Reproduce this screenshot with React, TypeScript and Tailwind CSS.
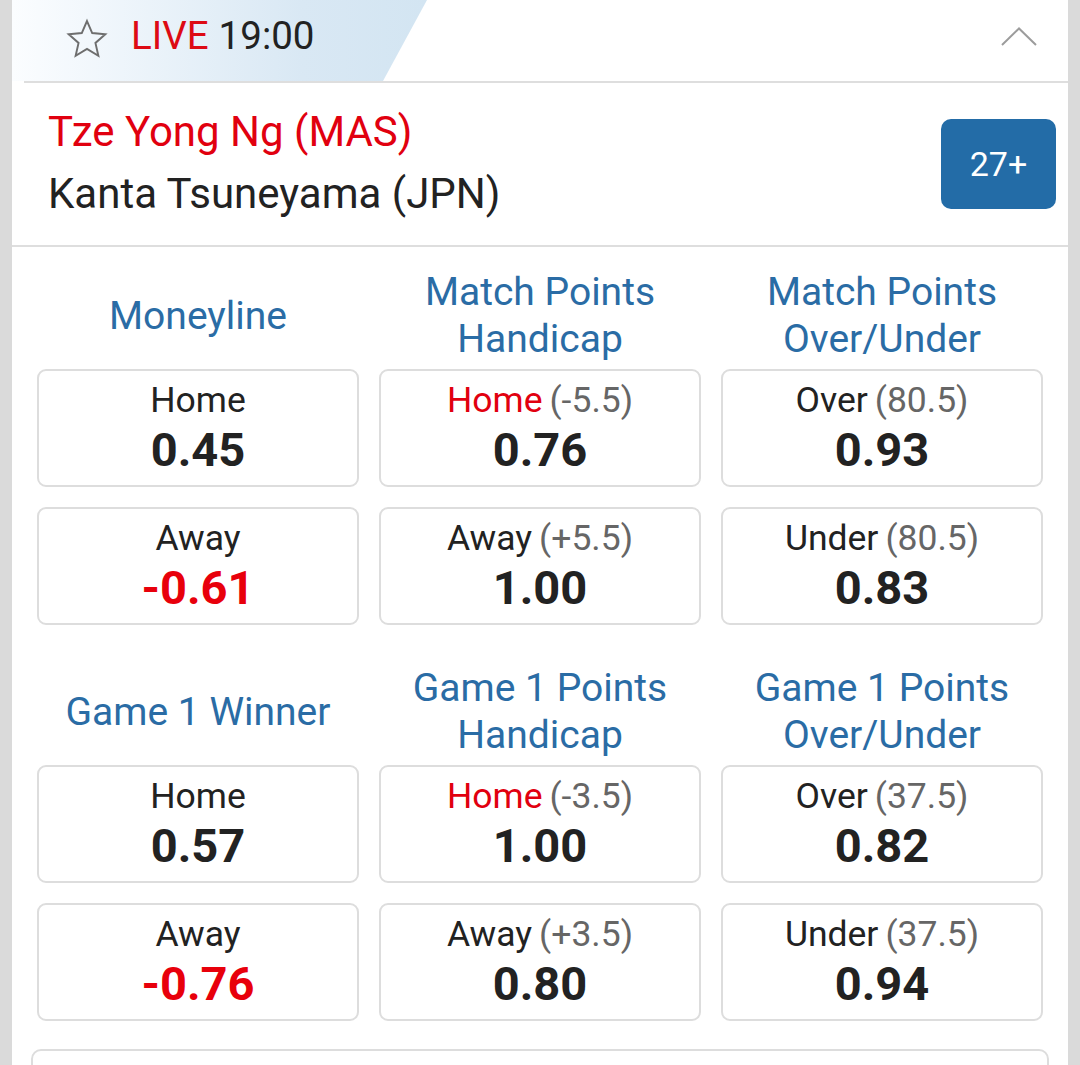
import React from "react";

type Cell = { label: string; labelRed?: boolean; line?: string; value: string; valueRed?: boolean };

const groups: { headers: string[][]; rows: Cell[][] }[] = [
  {
    headers: [["Moneyline"], ["Match Points", "Handicap"], ["Match Points", "Over/Under"]],
    rows: [
      [
        { label: "Home", value: "0.45" },
        { label: "Home", labelRed: true, line: "(-5.5)", value: "0.76" },
        { label: "Over", line: "(80.5)", value: "0.93" },
      ],
      [
        { label: "Away", value: "-0.61", valueRed: true },
        { label: "Away", line: "(+5.5)", value: "1.00" },
        { label: "Under", line: "(80.5)", value: "0.83" },
      ],
    ],
  },
  {
    headers: [["Game 1 Winner"], ["Game 1 Points", "Handicap"], ["Game 1 Points", "Over/Under"]],
    rows: [
      [
        { label: "Home", value: "0.57" },
        { label: "Home", labelRed: true, line: "(-3.5)", value: "1.00" },
        { label: "Over", line: "(37.5)", value: "0.82" },
      ],
      [
        { label: "Away", value: "-0.76", valueRed: true },
        { label: "Away", line: "(+3.5)", value: "0.80" },
        { label: "Under", line: "(37.5)", value: "0.94" },
      ],
    ],
  },
];

function OddsBox({ c }: { c: Cell }) {
  return (
    <div className="h-[118px] rounded-[9px] border-2 border-[#dddddd] bg-white flex flex-col items-center justify-center">
      <div className="text-[35.5px] leading-[44px] text-[#222]">
        <span className={c.labelRed ? "text-[#e1000f]" : "text-[#222]"}>{c.label}</span>
        {c.line && <span className="text-[#666] ml-[7px]">{c.line}</span>}
      </div>
      <div className={`text-[47px] leading-[56px] font-bold ${c.valueRed ? "text-[#e8000b]" : "text-[#222]"}`}>{c.value}</div>
    </div>
  );
}

function Group({ g }: { g: (typeof groups)[number] }) {
  return (
    <div className="px-[25px] pt-[22px] pb-[18px]">
      <div className="grid grid-cols-3 gap-x-[20px]">
        {g.headers.map((h, i) => (
          <div key={i} className="h-[94px] flex flex-col items-center justify-center text-center text-[39px] leading-[47px] text-[#2a6ca5]">
            {h.map((l, j) => (
              <div key={j} className="whitespace-nowrap">{l}</div>
            ))}
          </div>
        ))}
      </div>
      <div className="mt-[6px] grid grid-cols-3 gap-[20px]">
        {g.rows.flat().map((c, i) => (
          <OddsBox key={i} c={c} />
        ))}
      </div>
    </div>
  );
}

export default function App() {
  return (
    <div className="bg-[#dadada] px-[12px] font-[Roboto,sans-serif] overflow-hidden h-[1065px]">
      <div className="bg-white h-full">
        {/* header */}
        <div className="h-[81px] flex items-stretch">
          <div className="w-[415px] [clip-path:polygon(0_0,100%_0,calc(100%-44px)_100%,0_100%)] bg-linear-to-r from-[#fbfdff] via-[#d9e8f4] via-[70%] to-[#d3e5f2] flex items-center pl-[53px]">
            <svg width="44" height="44" viewBox="0 0 24 24" className="shrink-0 -mt-[4px]">
              <polygon
                points="12,2.2 14.85,8.75 22,9.4 16.6,14.15 18.2,21.2 12,17.45 5.8,21.2 7.4,14.15 2,9.4 9.15,8.75"
                fill="none"
                stroke="#6e6e6e"
                strokeWidth="1.05"
                strokeLinejoin="miter"
              />
            </svg>
            <span className="ml-[22px] text-[38.5px] leading-none text-[#dd0a14] -mt-[8px]">LIVE</span>
            <span className="ml-[10px] text-[38.5px] leading-none text-[#222] -mt-[8px]">19:00</span>
          </div>
          <div className="flex-1 flex items-center justify-end pr-[31px]">
            <svg width="36" height="20" viewBox="0 0 36 20" className="-mt-[8px]">
              <polyline points="1,18 18,1.5 35,18" fill="none" stroke="#9c9c9c" strokeWidth="2" />
            </svg>
          </div>
        </div>
        <div className="ml-[12px] h-[2px] bg-[#dedede]" />
        {/* names */}
        <div className="h-[162px] flex items-center pl-[36px] pr-[12px]">
          <div className="flex-1 -mt-[2px]">
            <div className="text-[42px] leading-[62px] text-[#e1000f]">Tze Yong Ng (MAS)</div>
            <div className="text-[42px] leading-[62px] text-[#222]">Kanta Tsuneyama (JPN)</div>
          </div>
          <div className="w-[115px] h-[90px] rounded-[10px] bg-[#236ca7] text-white text-[34px] flex items-center justify-center">
            27+
          </div>
        </div>
        <div className="h-[2px] bg-[#dedede]" />
        {groups.map((g, i) => (
          <Group key={i} g={g} />
        ))}
        <div className="mx-[19px] mt-[10px] h-[60px] rounded-t-[10px] border-2 border-[#dddddd]" />
      </div>
    </div>
  );
}
